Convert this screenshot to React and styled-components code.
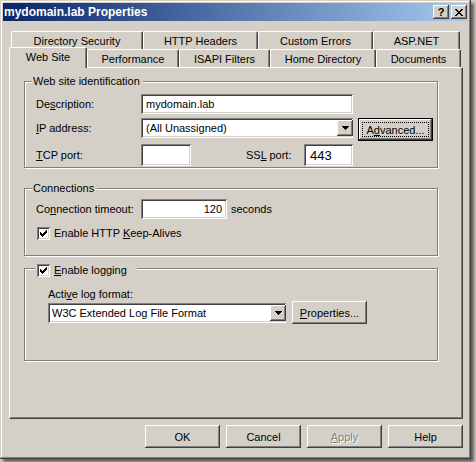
import React from 'react';
import styled, { createGlobalStyle, css } from 'styled-components';

const GlobalStyle = createGlobalStyle`
  html, body {
    margin: 0;
    padding: 0;
    background: #D4D0C8;
  }
  body {
    font-family: "Liberation Sans", Arial, sans-serif;
    font-size: 11px;
    color: #000;
  }
`;

const raised = css`
  box-shadow: inset -1px -1px #404040, inset 1px 1px #fff, inset -2px -2px #808080, inset 2px 2px #D4D0C8;
`;

const sunken = css`
  box-shadow: inset 1px 1px #808080, inset -1px -1px #fff, inset 2px 2px #404040, inset -2px -2px #D4D0C8;
`;

const Screen = styled.div`
  width: 476px;
  height: 462px;
  overflow: hidden;
  background: #D4D0C8;
`;

const Window = styled.div`
  box-sizing: border-box;
  width: 471px;
  height: 459px;
  padding: 3px;
  background: #D4D0C8;
  display: flex;
  flex-direction: column;
  box-shadow: inset -1px -1px #404040, inset 1px 1px #D4D0C8, inset -2px -2px #808080, inset 2px 2px #fff,
    3px 3px 3px rgba(0, 0, 0, 0.55);
`;

const TitleBar = styled.div`
  height: 18px;
  display: flex;
  align-items: center;
  padding: 0 1px 0 1px;
  background: linear-gradient(to right, #0A246A, #A6CAF0);
  color: #fff;
  font-weight: bold;
  font-size: 12px;
`;

const Title = styled.span`
  flex: 1;
  white-space: nowrap;
`;

const CaptionButton = styled.div`
  box-sizing: border-box;
  width: 16px;
  height: 14px;
  margin-left: 2px;
  background: #D4D0C8;
  color: #000;
  display: flex;
  align-items: center;
  justify-content: center;
  font-weight: bold;
  font-size: 11px;
  ${raised}
`;

const Body = styled.div`
  flex: 1;
  display: flex;
  flex-direction: column;
  padding: 10px 5px 0 6px;
`;

const TabRow = styled.div`
  display: flex;
  align-items: flex-start;
  height: 18px;
  padding-left: ${p => p.$indent || 0}px;
`;

const Tab = styled.div`
  box-sizing: border-box;
  flex-shrink: 0;
  width: ${p => p.$w}px;
  height: ${p => (p.$active ? 21 : 18)}px;
  margin-top: ${p => (p.$active ? -2 : 0)}px;
  padding-bottom: ${p => (p.$active ? 2 : 0)}px;
  display: flex;
  align-items: center;
  justify-content: center;
  background: #D4D0C8;
  border-top: 1px solid #fff;
  border-left: 1px solid #fff;
  border-right: 1px solid #404040;
  border-radius: 2px 2px 0 0;
  box-shadow: inset -1px 0 #808080;
  white-space: nowrap;
  ${p => p.$active && css`
    position: relative;
    z-index: 1;
  `}
`;

const Panel = styled.div`
  box-sizing: border-box;
  width: 454px;
  height: 352px;
  border-top: 1px solid #fff;
  border-left: 1px solid #fff;
  border-right: 1px solid #404040;
  border-bottom: 1px solid #404040;
  box-shadow: inset -1px -1px #808080;
  padding: 13px 0 0 14px;
`;

const Group = styled.div`
  position: relative;
  box-sizing: border-box;
  width: 414px;
  height: ${p => p.$h}px;
  margin-top: ${p => p.$mt || 0}px;
  padding: ${p => p.$pt}px 0 0 ${p => p.$pl}px;
  border: 1px solid #808080;
  box-shadow: inset 1px 1px #fff, 1px 1px #fff;
`;

const Legend = styled.div`
  position: absolute;
  top: ${p => p.$top ?? -7}px;
  left: ${p => p.$left ?? 7}px;
  height: 13px;
  line-height: 13px;
  display: flex;
  align-items: center;
  gap: 4px;
  padding: 0 ${p => p.$pr ?? 3}px 0 ${p => p.$pl ?? 1}px;
  background: #D4D0C8;
  white-space: nowrap;
`;

const Row = styled.div`
  display: flex;
  align-items: ${p => p.$align || 'center'};
  height: ${p => p.$h}px;
  margin-top: ${p => p.$mt || 0}px;
`;

const Label = styled.span`
  flex-shrink: 0;
  width: ${p => (p.$w ? `${p.$w}px` : 'auto')};
  margin-left: ${p => p.$ml || 0}px;
  margin-top: ${p => p.$mt || 0}px;
  line-height: 13px;
  white-space: nowrap;
`;

const TextBox = styled.div`
  box-sizing: border-box;
  flex-shrink: 0;
  width: ${p => p.$w}px;
  height: ${p => p.$h || 20}px;
  margin-left: ${p => p.$ml || 0}px;
  margin-top: ${p => p.$mt || 0}px;
  padding: 0 ${p => p.$pr ?? 4}px 0 ${p => p.$pl ?? 5}px;
  background: #fff;
  display: flex;
  align-items: center;
  justify-content: ${p => (p.$right ? 'flex-end' : 'flex-start')};
  font-size: ${p => p.$fs || 11}px;
  white-space: nowrap;
  ${sunken}
`;

const ComboText = styled.span`
  flex: 1;
`;

const DropButton = styled.div`
  box-sizing: border-box;
  width: 16px;
  height: 16px;
  margin-right: -2px;
  background: #D4D0C8;
  display: flex;
  align-items: center;
  justify-content: center;
  ${raised}
`;

const Button = styled.div`
  position: relative;
  box-sizing: border-box;
  flex-shrink: 0;
  width: 75px;
  height: 23px;
  margin-left: ${p => p.$ml || 0}px;
  background: #D4D0C8;
  display: flex;
  align-items: center;
  justify-content: center;
  white-space: nowrap;
  color: ${p => (p.$disabled ? '#808080' : '#000')};
  text-shadow: ${p => (p.$disabled ? '1px 1px #fff' : 'none')};
  ${raised}
  ${p => p.$default && css`
    border: 1px solid #000;
    box-shadow: inset -1px -1px #404040, inset 1px 1px #fff, inset -2px -2px #808080;
    &::after {
      content: '';
      position: absolute;
      inset: 3px;
      border: 1px dotted #000;
    }
  `}
`;

const CheckBox = styled.span`
  box-sizing: border-box;
  flex-shrink: 0;
  width: 13px;
  height: 13px;
  margin-left: ${p => p.$ml || 0}px;
  background: #fff;
  display: flex;
  align-items: center;
  justify-content: center;
  ${sunken}
`;

const CheckLabel = styled.span`
  margin-left: 4px;
  line-height: 13px;
  white-space: nowrap;
`;

const ButtonBar = styled.div`
  display: flex;
  justify-content: flex-end;
  gap: 6px;
  margin-top: 6px;
`;

const CHECK = [[6], [5, 6], [0, 4, 5, 6], [0, 1, 3, 4, 5], [0, 1, 2, 3, 4], [1, 2, 3], [2]];
const CLOSE = [[0, 1, 6, 7], [1, 2, 5, 6], [2, 3, 4, 5], [3, 4], [2, 3, 4, 5], [1, 2, 5, 6], [0, 1, 6, 7]];

const Pixels = ({ rows, w }) => (
  <svg width={w} height={rows.length} viewBox={`0 0 ${w} ${rows.length}`} shapeRendering="crispEdges">
    {rows.flatMap((xs, y) => xs.map(x => <rect key={`${x}-${y}`} x={x} y={y} width="1" height="1" fill="#000" />))}
  </svg>
);

const Arrow = () => (
  <svg width="7" height="4" viewBox="0 0 7 4" shapeRendering="crispEdges">
    <rect x="0" y="0" width="7" height="1" fill="#000" />
    <rect x="1" y="1" width="5" height="1" fill="#000" />
    <rect x="2" y="2" width="3" height="1" fill="#000" />
    <rect x="3" y="3" width="1" height="1" fill="#000" />
  </svg>
);

const Check = ({ ml }) => (
  <CheckBox $ml={ml}>
    <Pixels rows={CHECK} w={7} />
  </CheckBox>
);

const Combo = ({ w, ml, mt, pl, children }) => (
  <TextBox $w={w} $ml={ml} $mt={mt} $pl={pl} $pr={2}>
    <ComboText>{children}</ComboText>
    <DropButton>
      <Arrow />
    </DropButton>
  </TextBox>
);

const backTabs = [
  ['Directory Security', 132],
  ['HTTP Headers', 115],
  ['Custom Errors', 115],
  ['ASP.NET', 87],
];

const frontTabs = [
  ['Web Site', 78, true],
  ['Performance', 92],
  ['ISAPI Filters', 91],
  ['Home Directory', 106],
  ['Documents', 85],
];

export default function App() {
  return (
    <Screen>
      <GlobalStyle />
      <Window>
        <TitleBar>
          <Title>mydomain.lab Properties</Title>
          <CaptionButton>?</CaptionButton>
          <CaptionButton>
            <Pixels rows={CLOSE} w={8} />
          </CaptionButton>
        </TitleBar>

        <Body>
          <TabRow $indent={2}>
            {backTabs.map(([name, w]) => (
              <Tab key={name} $w={w}>{name}</Tab>
            ))}
          </TabRow>
          <TabRow>
            {frontTabs.map(([name, w, active]) => (
              <Tab key={name} $w={w} $active={active}>{name}</Tab>
            ))}
          </TabRow>

          <Panel>
            <Group $h={87} $pt={12} $pl={11}>
              <Legend>Web site identification</Legend>
              <Row $h={20}>
                <Label $w={105}>De<u>s</u>cription:</Label>
                <TextBox $w={212}>mydomain.lab</TextBox>
              </Row>
              <Row $h={23} $mt={4} $align="flex-start">
                <Label $w={105} $mt={4}><u>I</u>P address:</Label>
                <Combo w={212}>(All Unassigned)</Combo>
                <Button $default $ml={5}>A<u>d</u>vanced...</Button>
              </Row>
              <Row $h={22} $mt={3}>
                <Label $w={105}><u>T</u>CP port:</Label>
                <TextBox $w={50} $h={22} />
                <Label $ml={55} $w={58}>SS<u>L</u> port:</Label>
                <TextBox $w={49} $h={22} $pl={6} $fs={13}>443</TextBox>
              </Row>
            </Group>

            <Group $h={68} $mt={20} $pt={10} $pl={11}>
              <Legend>Connections</Legend>
              <Row $h={20}>
                <Label $w={105}>Co<u>n</u>nection timeout:</Label>
                <TextBox $w={86} $right $pr={5}>120</TextBox>
                <Label $ml={4}>seconds</Label>
              </Row>
              <Row $h={13} $mt={8}>
                <Check ml={1} />
                <CheckLabel>Enable HTTP <u>K</u>eep-Alives</CheckLabel>
              </Row>
            </Group>

            <Group $h={93} $mt={12} $pt={19} $pl={23}>
              <Legend $top={-5} $left={10} $pl={2} $pr={10}>
                <CheckBox>
                  <Pixels rows={CHECK} w={7} />
                </CheckBox>
                <span><u>E</u>nable logging</span>
              </Legend>
              <Label>Acti<u>v</u>e log format:</Label>
              <Row $h={23} $align="flex-start">
                <Combo w={238} mt={2} pl={4}>W3C Extended Log File Format</Combo>
                <Button $ml={6}><u>P</u>roperties...</Button>
              </Row>
            </Group>
          </Panel>

          <ButtonBar>
            <Button>OK</Button>
            <Button>Cancel</Button>
            <Button $disabled><u>A</u>pply</Button>
            <Button>Help</Button>
          </ButtonBar>
        </Body>
      </Window>
    </Screen>
  );
}
